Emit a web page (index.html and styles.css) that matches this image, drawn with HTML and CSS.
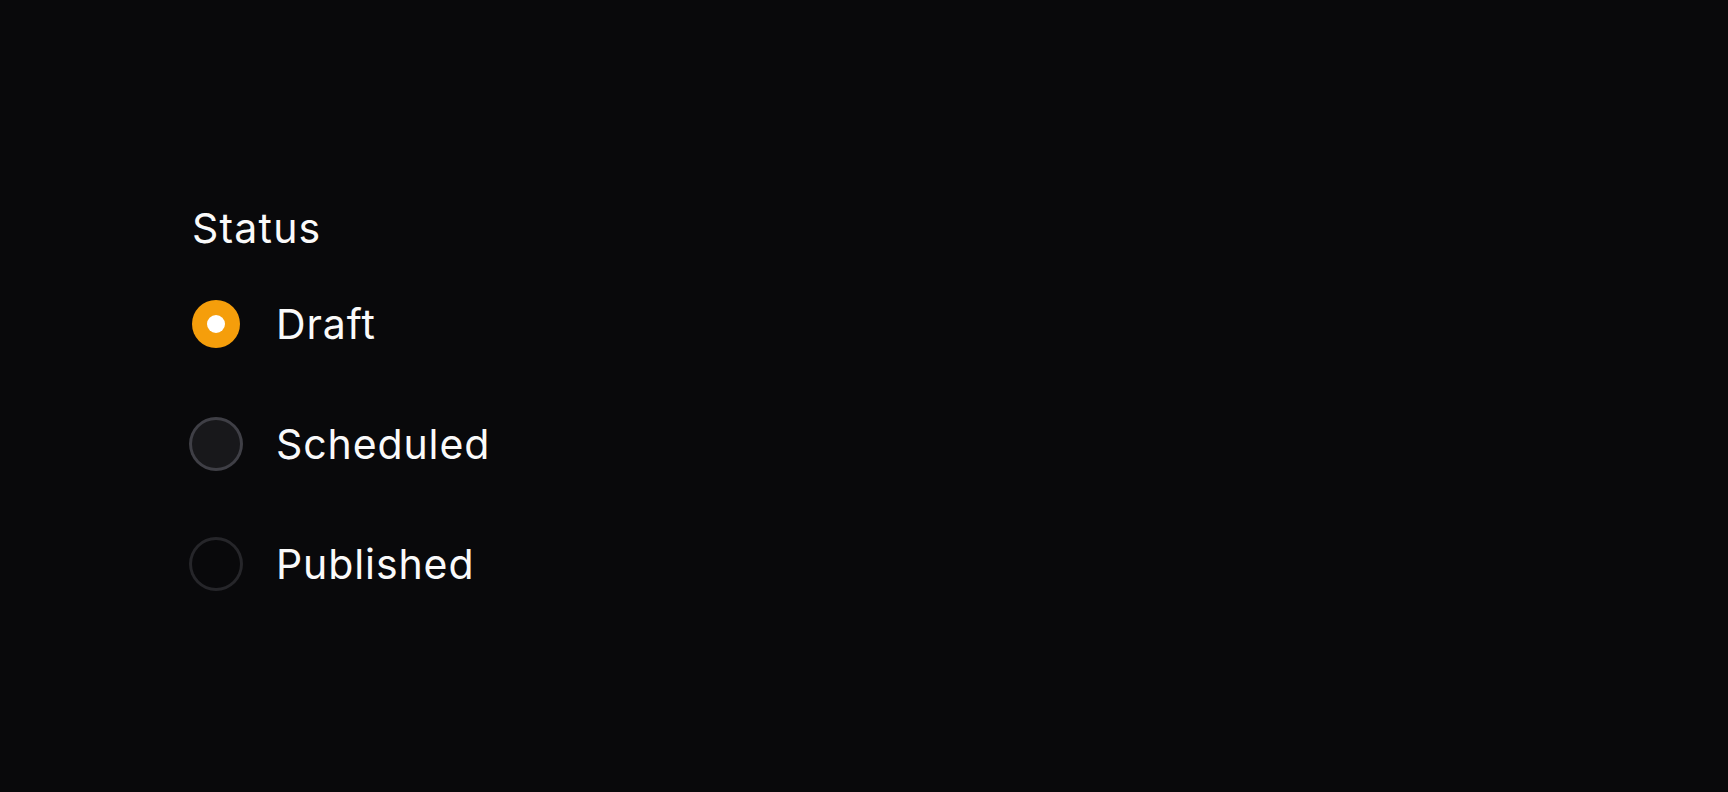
FILE: index.html
```html
<!DOCTYPE html>
<html lang="en">
<head>
<meta charset="utf-8">
<title>Status</title>
<link rel="stylesheet" href="styles.css">
</head>
<body>
  <main class="page">
    <fieldset class="group" role="radiogroup" aria-label="Status">
      <div class="group-label">Status</div>
      <div class="options">
        <label class="option">
          <span class="radio radio-checked"><span class="radio-dot"></span></span>
          <span class="option-text">Draft</span>
        </label>
        <label class="option">
          <span class="radio radio-hover"></span>
          <span class="option-text">Scheduled</span>
        </label>
        <label class="option">
          <span class="radio"></span>
          <span class="option-text">Published</span>
        </label>
      </div>
    </fieldset>
  </main>
</body>
</html>
```

FILE: styles.css
```css
html, body {
  margin: 0;
  padding: 0;
  background: #09090b;
}

body {
  font-family: Inter, "Noto Sans", "Liberation Sans", sans-serif;
  color: #fafafa;
  min-height: 792px;
}

.page {
  padding: 204px 0 0 192px;
}

.group {
  border: 0;
  margin: 0;
  padding: 0;
  min-width: 0;
}

.group-label {
  font-size: 41px;
  line-height: 48px;
  font-weight: 400;
  letter-spacing: 1.2px;
  margin-bottom: 48px;
}

.options {
  display: flex;
  flex-direction: column;
  gap: 72px;
}

.option {
  display: flex;
  align-items: center;
  gap: 36px;
  height: 48px;
}

.radio {
  width: 48px;
  height: 48px;
  border-radius: 50%;
  flex: none;
  display: flex;
  align-items: center;
  justify-content: center;
  box-shadow: 0 0 0 3px #26262a;
  background: transparent;
}

.radio-hover {
  background: #18181b;
  box-shadow: 0 0 0 3px #3f3f46;
}

.radio-checked {
  background: #f59e0b;
  box-shadow: none;
}

.radio-dot {
  width: 18px;
  height: 18px;
  border-radius: 50%;
  background: #ffffff;
}

.option-text {
  font-size: 41px;
  line-height: 48px;
  font-weight: 400;
  letter-spacing: 0.9px;
}
```
